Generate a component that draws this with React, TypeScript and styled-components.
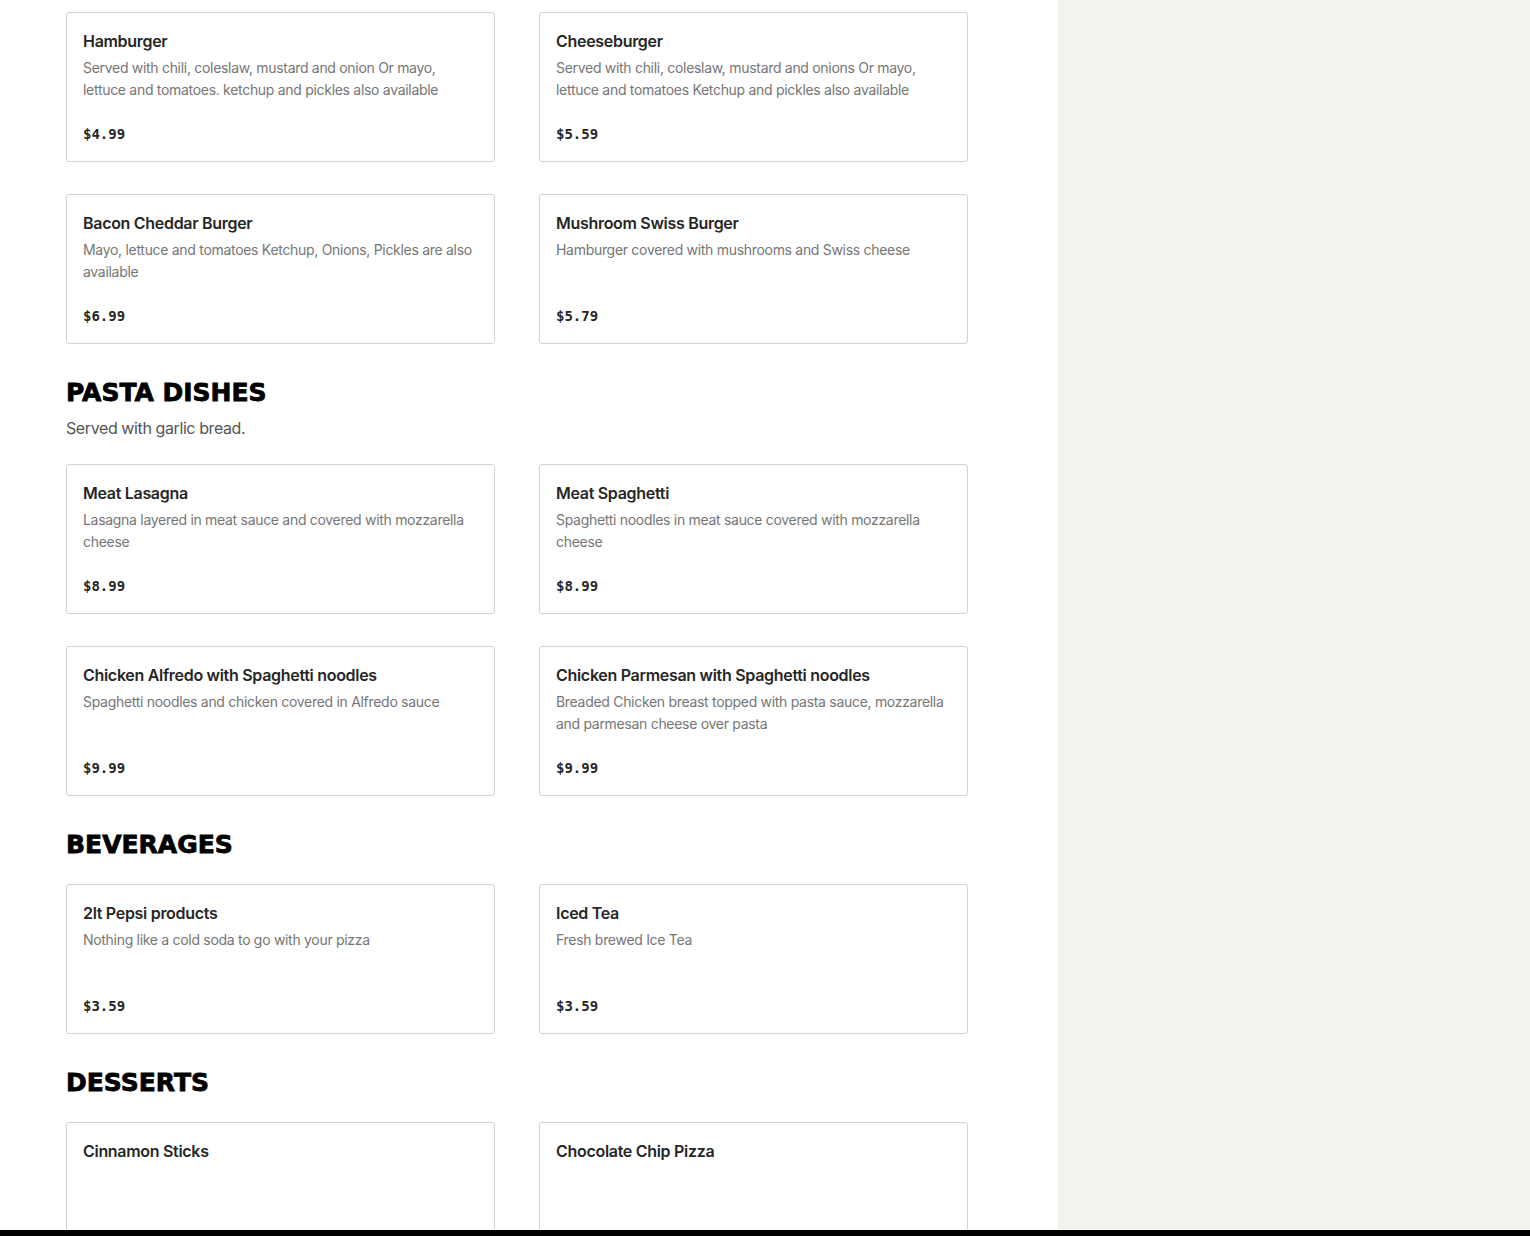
import React from "react";
import styled, { createGlobalStyle } from "styled-components";

const GlobalStyle = createGlobalStyle`
  * {
    box-sizing: border-box;
  }
  body {
    margin: 0;
    background: #ffffff;
    font-family: Inter, "Liberation Sans", Arial, sans-serif;
    overflow: hidden;
  }
`;

const Page = styled.div`
  display: flex;
  min-height: 100vh;
  height: 1236px;
  overflow: hidden;
`;

const Menu = styled.main`
  width: 1058px;
  flex-shrink: 0;
  background: #ffffff;
  padding: 12px 90px 0 66px;
`;

const SidePanel = styled.aside`
  flex: 1;
  background: #f3f2ef;
`;

const Section = styled.section`
  margin-bottom: 33px;
`;

const SectionTitle = styled.h2`
  margin: 0;
  font-family: "DejaVu Sans", "Liberation Sans", sans-serif;
  font-weight: 700;
  font-size: 25px;
  line-height: 32px;
  color: #000000;
  -webkit-text-stroke: 0.8px #000000;
`;

const SectionNote = styled.p`
  margin: 8px 0 0;
  font-size: 16px;
  line-height: 22px;
  letter-spacing: -0.4px;
  color: #555555;
`;

const Grid = styled.div<{ $offset: number }>`
  display: grid;
  grid-template-columns: repeat(2, 429px);
  column-gap: 44px;
  row-gap: 32px;
  margin-top: ${(p) => p.$offset}px;
`;

const Card = styled.article`
  display: flex;
  flex-direction: column;
  height: 150px;
  border: 1px solid #d3d3d3;
  border-radius: 3px;
  padding: 16px 16px 16px;
  background: #ffffff;
`;

const ItemName = styled.h3`
  margin: 0;
  font-size: 16px;
  font-weight: 600;
  line-height: 24px;
  letter-spacing: -0.3px;
  color: #262626;
`;

const ItemDesc = styled.p`
  margin: 4px 0 0;
  min-height: 44px;
  font-size: 14px;
  line-height: 22px;
  letter-spacing: -0.3px;
  color: #767676;
`;

const Price = styled.span`
  margin-top: 23px;
  font-family: "DejaVu Sans Mono", "Liberation Mono", monospace;
  font-weight: 700;
  font-size: 14px;
  line-height: 20px;
  color: #262626;
`;

const BottomBar = styled.div`
  position: fixed;
  left: 0;
  right: 0;
  bottom: 0;
  height: 6px;
  background: #000000;
`;

type Item = { name: string; desc?: string; price?: string };
type Category = { title?: string; note?: string; items: Item[] };

const menu: Category[] = [
  {
    items: [
      {
        name: "Hamburger",
        desc: "Served with chili, coleslaw, mustard and onion Or mayo, lettuce and tomatoes. ketchup and pickles also available",
        price: "$4.99",
      },
      {
        name: "Cheeseburger",
        desc: "Served with chili, coleslaw, mustard and onions Or mayo, lettuce and tomatoes Ketchup and pickles also available",
        price: "$5.59",
      },
      {
        name: "Bacon Cheddar Burger",
        desc: "Mayo, lettuce and tomatoes Ketchup, Onions, Pickles are also available",
        price: "$6.99",
      },
      {
        name: "Mushroom Swiss Burger",
        desc: "Hamburger covered with mushrooms and Swiss cheese",
        price: "$5.79",
      },
    ],
  },
  {
    title: "PASTA DISHES",
    note: "Served with garlic bread.",
    items: [
      {
        name: "Meat Lasagna",
        desc: "Lasagna layered in meat sauce and covered with mozzarella cheese",
        price: "$8.99",
      },
      {
        name: "Meat Spaghetti",
        desc: "Spaghetti noodles in meat sauce covered with mozzarella cheese",
        price: "$8.99",
      },
      {
        name: "Chicken Alfredo with Spaghetti noodles",
        desc: "Spaghetti noodles and chicken covered in Alfredo sauce",
        price: "$9.99",
      },
      {
        name: "Chicken Parmesan with Spaghetti noodles",
        desc: "Breaded Chicken breast topped with pasta sauce, mozzarella and parmesan cheese over pasta",
        price: "$9.99",
      },
    ],
  },
  {
    title: "BEVERAGES",
    items: [
      {
        name: "2lt Pepsi products",
        desc: "Nothing like a cold soda to go with your pizza",
        price: "$3.59",
      },
      { name: "Iced Tea", desc: "Fresh brewed Ice Tea", price: "$3.59" },
    ],
  },
  {
    title: "DESSERTS",
    items: [{ name: "Cinnamon Sticks" }, { name: "Chocolate Chip Pizza" }],
  },
];

export default function App() {
  return (
    <>
      <GlobalStyle />
      <Page>
        <Menu>
          {menu.map((cat, i) => (
            <Section key={i}>
              {cat.title && <SectionTitle>{cat.title}</SectionTitle>}
              {cat.note && <SectionNote>{cat.note}</SectionNote>}
              <Grid $offset={cat.note ? 25 : cat.title ? 23 : 0}>
                {cat.items.map((item) => (
                  <Card key={item.name}>
                    <ItemName>{item.name}</ItemName>
                    <ItemDesc>{item.desc}</ItemDesc>
                    {item.price && <Price>{item.price}</Price>}
                  </Card>
                ))}
              </Grid>
            </Section>
          ))}
        </Menu>
        <SidePanel />
      </Page>
      <BottomBar />
    </>
  );
}
